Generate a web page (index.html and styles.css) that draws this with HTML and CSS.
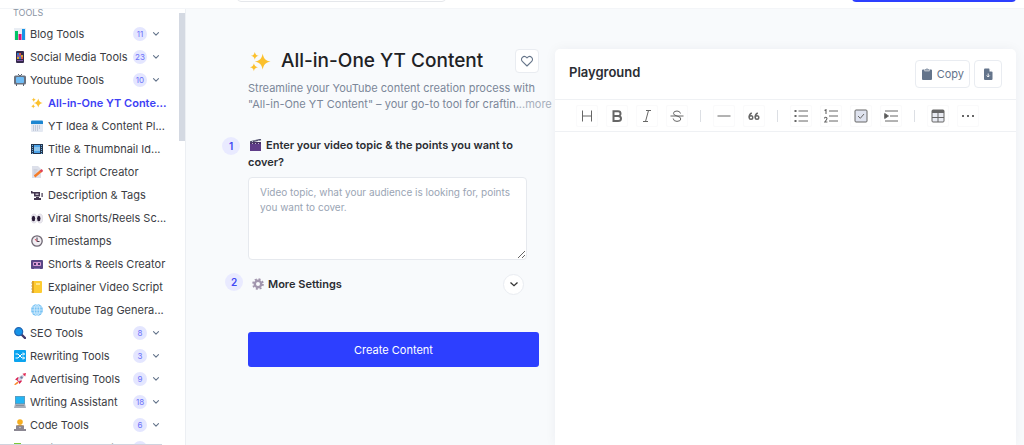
FILE: index.html
```html
<!DOCTYPE html>
<html lang="en">
<head>
<meta charset="utf-8">
<title>All-in-One YT Content</title>
<link rel="stylesheet" href="styles.css">
</head>
<body>
<svg class="defs" aria-hidden="true">
  <symbol id="chev" viewBox="0 0 10 10"><path d="M2.500 3.700 5 6.200 7.500 3.700" fill="none" stroke="currentColor" stroke-width="1.100" stroke-linecap="round" stroke-linejoin="round"/></symbol>
  <symbol id="sparkles" viewBox="0 0 24 24"><path fill="#fbc02d" d="M14.500 3c1.300 5.800 3.200 7.700 9 9-5.800 1.300-7.700 3.200-9 9-1.300-5.800-3.200-7.700-9-9 5.800-1.300 7.700-3.200 9-9zM5.500 1c.7 2.900 1.600 3.800 4.500 4.500-2.900.7-3.800 1.600-4.500 4.500C4.800 7.100 3.900 6.200 1 5.500 3.900 4.800 4.800 3.900 5.500 1zM4.500 14c.7 2.900 1.600 3.800 4.500 4.500-2.900.7-3.800 1.600-4.500 4.500-.7-2.900-1.600-3.800-4.500-4.500 2.900-.7 3.800-1.600 4.500-4.500z"/></symbol>
</svg>

<header class="topbar">
  <input class="search" type="search" aria-label="Search tools">
  <button class="upgrade" type="button" aria-label="Upgrade"></button>
</header>

<div class="shell">
  <nav class="sidebar" aria-label="Tools">
    <h2 class="label">TOOLS</h2>
    <ul class="list">
      <li><a class="row" href="#"><svg class="ic" viewBox="0 0 12 12"><path fill="#e9eef4" d="M0 0h12v12H0z"/><path fill="#00c566" d="M1 3h3v9H1z"/><path fill="#e0107a" d="M4.500 6h3v6h-3z"/><path fill="#1593e6" d="M8 1h3v11H8z"/></svg><span class="name">Blog Tools</span><span class="count">11</span><svg class="chev"><use href="#chev"/></svg></a></li>
      <li><a class="row" href="#"><svg class="ic" viewBox="0 0 12 12"><rect x="2" y="0" width="8" height="12" rx="1" fill="#352a4d"/><path fill="#297cc9" d="M3 2h2v2H3zM5 6h2v2H5z"/><path fill="#e2553c" d="M5 2h2v2H5zM7 6h2v2H7z"/><path fill="#d9a52e" d="M7 4h2v2H7zM3 6h2v2H3z"/><path fill="#805aa8" d="M3 4h4v2H3zM3 9h6v1H3z"/></svg><span class="name">Social Media Tools</span><span class="count">23</span><svg class="chev"><use href="#chev"/></svg></a></li>
      <li><a class="row" href="#"><svg class="ic" viewBox="0 0 12 12"><path d="M4 0l2 2 2-2M2.500 10v2M9.500 10v2" stroke="#5b6370" fill="none"/><rect y="1.500" width="12" height="9" rx="1.500" fill="#69717f"/><rect x="2" y="3" width="8" height="6" rx="1" fill="#6fbcf5"/></svg><span class="name">Youtube Tools</span><span class="count">10</span><svg class="chev"><use href="#chev"/></svg></a>
        <ul class="list sub">
          <li><a class="row active" href="#"><svg class="ic"><use href="#sparkles"/></svg><span class="name">All-in-One YT Conte...</span></a></li>
          <li><a class="row" href="#"><svg class="ic" viewBox="0 0 12 12"><rect y="1" width="12" height="11" rx="1" fill="#e4e9f2"/><path fill="#1c86d1" d="M0 1.500Q0 .5 1 .5h10q1 0 1 1V4H0z"/><path d="M2 6h8M2 8h8M2 10h6" stroke="#a3aec4" stroke-dasharray="1 1"/></svg><span class="name">YT Idea &amp; Content Pl...</span></a></li>
          <li><a class="row" href="#"><svg class="ic" viewBox="0 0 12 12"><path fill="#24364f" d="M0 1h12v10H0z"/><path fill="#4da3e8" d="M3 2h6v8H3z"/><path fill="#8ec6ee" d="M3 4h6v4H3z"/><path d="M1.500 2v9M10.500 2v9" stroke="#6fb2e6" stroke-dasharray="1 1"/></svg><span class="name">Title &amp; Thumbnail Id...</span></a></li>
          <li><a class="row" href="#"><svg class="ic" viewBox="0 0 12 12"><path fill="#dde0ea" d="M1 0h6l3 3v9H1z"/><path d="M2.500 4h4M2.500 6h3M2.500 8h2" stroke="#b4b8c8" stroke-width=".7"/><path d="M3.500 10.500 10 5" stroke="#f57c28" stroke-width="2.400"/><path d="m9.500 5.500 2-1.500" stroke="#e04358" stroke-width="2.400"/></svg><span class="name">YT Script Creator</span></a></li>
          <li><a class="row" href="#"><svg class="ic" viewBox="0 0 12 12"><path fill="#43364f" d="M0 2h1.500v1H9v4.500H3V4.500H0zM10.500 4h1.200v4h-1.200zM5 8h3v1h2v2H3V9h2z"/><path fill="#c4bccb" d="M4.500 4.500h3V6h-3z"/></svg><span class="name">Description &amp; Tags</span></a></li>
          <li><a class="row" href="#"><svg class="ic" viewBox="0 0 12 12"><g fill="#eceaf1" stroke="#ccc8d5" stroke-width=".5"><ellipse cx="3" cy="6.500" rx="2.800" ry="4.500"/><ellipse cx="9" cy="6.500" rx="2.800" ry="4.500"/></g><ellipse cx="2.500" cy="6.500" rx="1.700" ry="2.700" fill="#291b37"/><ellipse cx="7.800" cy="6.500" rx="1.700" ry="2.700" fill="#291b37"/></svg><span class="name">Viral Shorts/Reels Sc...</span></a></li>
          <li><a class="row" href="#"><svg class="ic" viewBox="0 0 12 12"><circle cx="6" cy="6" r="5.200" fill="#f0edf2" stroke="#6d6672" stroke-width="1.300"/><path d="M6 2.500V6.500H8.500" fill="none" stroke="#433b49"/><path d="M6 6.500 4 4" stroke="#e34b62"/></svg><span class="name">Timestamps</span></a></li>
          <li><a class="row" href="#"><svg class="ic" viewBox="0 0 12 12"><rect y="2" width="12" height="9" rx="1" fill="#594787"/><rect x="2" y="4" width="8" height="4" rx="1" fill="#d99bd6"/><path fill="#483670" d="M3 5h2v2H3zM7 5h2v2H7z"/><path fill="#8572b1" d="M3 10h6v1H3z"/></svg><span class="name">Shorts &amp; Reels Creator</span></a></li>
          <li><a class="row" href="#"><svg class="ic" viewBox="0 0 12 12"><rect x="1" width="10" height="12" rx="1" fill="#fdcb31"/><path fill="#e5a51f" d="M1 0h2v12H1z"/><path d="M0 2h2M0 5h2M0 8h2M0 11h2" stroke="#b69a58" stroke-width=".7"/><path fill="#ffe58b" d="M5 2h4v2H5z"/></svg><span class="name">Explainer Video Script</span></a></li>
          <li><a class="row" href="#"><svg class="ic" viewBox="0 0 12 12"><circle cx="6" cy="6" r="6" fill="#79c3f4"/><g fill="none" stroke="#d9f0ff" stroke-width=".8"><ellipse cx="6" cy="6" rx="2.800" ry="5.600"/><path d="M6 0v12M0 6h12M1 3h10M1 9h10"/></g></svg><span class="name">Youtube Tag Genera...</span></a></li>
        </ul>
      </li>
      <li><a class="row" href="#"><svg class="ic" viewBox="0 0 12 12"><path d="m7.500 7.500 3.500 3.500" stroke="#43396a" stroke-width="2.400" stroke-linecap="round"/><circle cx="4.700" cy="4.700" r="4" fill="#1594e8" stroke="#2165b3" stroke-width="1.200"/></svg><span class="name">SEO Tools</span><span class="count">8</span><svg class="chev"><use href="#chev"/></svg></a></li>
      <li><a class="row" href="#"><svg class="ic" viewBox="0 0 12 12"><rect width="12" height="12" rx="1" fill="#0ba4ef"/><path d="M1.500 4H4l4 4h2.500M1.500 8H4l4-4h2.500M9 2.500 10.500 4 9 5.500M9 6.500 10.500 8 9 9.500" fill="none" stroke="#fff"/></svg><span class="name">Rewriting Tools</span><span class="count">3</span><svg class="chev"><use href="#chev"/></svg></a></li>
      <li><a class="row" href="#"><svg class="ic" viewBox="0 0 12 12"><path fill="#d91e50" d="M1 6.500 4 4l4 4-2.500 3-1-2-2-2z"/><path fill="#d8d2e0" d="M3.500 7Q5 2 10 1.500 10 6.500 5 8.500z"/><path fill="#e22752" d="M8.500.8 12 0l-.8 3.500z"/><circle cx="7.500" cy="4.500" r="1.200" fill="#67809f"/><path fill="#f98a2c" d="m3.500 8.500-3.500 3 1.500.5 3-2z"/></svg><span class="name">Advertising Tools</span><span class="count">9</span><svg class="chev"><use href="#chev"/></svg></a></li>
      <li><a class="row" href="#"><svg class="ic" viewBox="0 0 12 12"><path fill="#828b99" d="M1 0h10v8H1z"/><path fill="#23b5f4" d="M1.500.5h9v7h-9z"/><path fill="#a8aeb9" d="M1 8h10l1 4H0z"/><path stroke="#7c8492" stroke-width=".7" d="M2 9.500h8"/></svg><span class="name">Writing Assistant</span><span class="count">18</span><svg class="chev"><use href="#chev"/></svg></a></li>
      <li><a class="row" href="#"><svg class="ic" viewBox="0 0 12 12"><circle cx="6" cy="3" r="2.800" fill="#f5ae20"/><path fill="#e39a25" d="M2 7q4-3 8 0v2H2z"/><path fill="#8b8792" d="M2 6.500h8v4H2zM0 10h12v2H0z"/><circle cx="6" cy="8.500" r=".7" fill="#ddd"/></svg><span class="name">Code Tools</span><span class="count">6</span><svg class="chev"><use href="#chev"/></svg></a></li>
      <li><a class="row" href="#"><svg class="ic" viewBox="0 0 12 12"><path fill="#7ec936" d="M0 1h7v3h5v7H0z"/></svg><span class="name">Custom Generator</span><span class="count">2</span><svg class="chev"><use href="#chev"/></svg></a></li>
    </ul>
    <div class="thumb"></div>
    <div class="status"></div>
  </nav>

  <main class="main">
    <form class="form">
      <section class="intro">
        <div class="head">
          <svg class="spark"><use href="#sparkles"/></svg>
          <h1>All-in-One YT Content</h1>
          <button class="fav" type="button" aria-label="Add to favourites"><svg viewBox="0 0 14 14"><path d="M7 12 2.300 7.300C-.2 4.700 3.500.4 7 3.800c3.500-3.400 7.200.9 4.700 3.500z" fill="none" stroke="#66758a" stroke-width="1.100" stroke-linejoin="round"/></svg></button>
        </div>
        <p class="desc">Streamline your YouTube content creation process with<br>"All-in-One YT Content" – your go-to tool for craftin<a class="more" href="#">...more</a></p>
      </section>

      <section class="step">
        <span class="num">1</span>
        <div class="field">
          <label for="topic"><svg class="ic inline" viewBox="0 0 12 12"><path fill="#5f3c88" d="M0 5h11v7H0z"/><path fill="#493166" d="M0 3h11v2H0z"/><path d="M0 3 11 .5" stroke="#51516d" stroke-width="1.700"/><path d="m2 2 1 1m2-1.500 1 1m2-1.700 1 1M2 5l1-1m2 1 1-1m2 1 1-1" stroke="#d7d4e5" stroke-width=".8"/></svg>Enter your video topic &amp; the points you want to cover?</label>
          <textarea id="topic" placeholder="Video topic, what your audience is looking for, points you want to cover."></textarea>
        </div>
      </section>

      <section class="step settings">
        <span class="num">2</span>
        <h2><svg class="ic inline" viewBox="0 0 12 12"><circle cx="6" cy="6" r="4.900" fill="none" stroke="#a296ae" stroke-width="1.800" stroke-dasharray="2 1.850"/><circle cx="6" cy="6" r="3.200" fill="none" stroke="#a296ae" stroke-width="2.400"/></svg>More Settings</h2>
        <button class="expand" type="button" aria-label="Show more settings"><svg viewBox="0 0 10 10"><path d="M1.500 3.500 5 6.700 8.500 3.500" fill="none" stroke="#333" stroke-width="1.300"/></svg></button>
      </section>

      <button class="create" type="button">Create Content</button>
    </form>

    <section class="card">
      <div class="cardhead">
        <h2>Playground</h2>
        <button class="act" type="button"><svg viewBox="0 0 12 12"><path fill="#64748b" d="M2 1.500h1.500v1.700h5V1.500H10q1 0 1 1V11q0 1-1 1H2q-1 0-1-1V2.500q0-1 1-1z"/><path fill="#94a0b0" d="M4 1h1q1-1.500 2 0h1v1.700H4z"/></svg>Copy</button>
        <button class="act save" type="button" aria-label="Download"><svg viewBox="0 0 12 12"><path fill="#64748b" d="M3 .5h4l3.500 3.500v7q0 1-1 1H3q-1 0-1-1v-9.500q0-1 1-1z"/><path fill="#fff" d="M7.500 .5V3.500h3z"/><path d="M6.200 5.500v3.500M4.700 7.500l1.500 1.500 1.500-1.500" stroke="#fff" fill="none" stroke-width=".9"/></svg></button>
      </div>
      <div class="tools" role="toolbar" aria-label="Formatting">
        <button class="tool" type="button" aria-label="Heading"><svg viewBox="0 0 14 14"><path d="M2.500 1.500v11M11.500 1.500v11M2.500 7h9"/></svg></button>
        <button class="tool" type="button" aria-label="Bold"><svg viewBox="0 0 14 14"><path d="M3.500 2.200H8q2.500 0 2.500 2.400T8 7H3.500zM3.500 7H8q3 0 3 2.500T8 12H3.500z" stroke-width="2"/></svg></button>
        <button class="tool" type="button" aria-label="Italic"><svg viewBox="0 0 14 14"><path d="M6 1.500h5M3 12.500h5M8.500 1.500l-3 11"/></svg></button>
        <button class="tool" type="button" aria-label="Strikethrough"><svg viewBox="0 0 14 14"><path d="M.5 7h13M10.500 4.500Q10 2 7 2 3.500 2 3.500 4.300 3.500 6.300 7 7q3.800.8 3.800 3T7 12.400Q3.500 12.400 3.200 9.500"/></svg></button>
        <span class="sep"></span>
        <button class="tool" type="button" aria-label="Line"><svg viewBox="0 0 14 14"><path d="M.5 7h13"/></svg></button>
        <button class="tool" type="button" aria-label="Quote"><svg viewBox="0 0 14 14"><g stroke-width="1.400"><circle cx="4" cy="8.500" r="1.800"/><path d="M2.200 8.500Q2 5 4.800 4"/><circle cx="10" cy="8.500" r="1.800"/><path d="M8.200 8.500Q8 5 10.800 4"/></g></svg></button>
        <span class="sep"></span>
        <button class="tool" type="button" aria-label="Bullet list"><svg viewBox="0 0 14 14"><path d="M4.500 2H14M4.500 7H14M4.500 12H14"/><path d="M.5 2h2M.5 7h2M.5 12h2" stroke-width="2"/></svg></button>
        <button class="tool" type="button" aria-label="Numbered list"><svg viewBox="0 0 14 14"><path d="M5 2h9M5 7h9M5 12h9"/><path d="M.5 1.500 2 .7V5M.5 9.500q0-1.200 1.200-1.200T3 9.500Q3 10.500.7 13H3.400" stroke-width="1.100"/></svg></button>
        <button class="tool" type="button" aria-label="Task list"><svg viewBox="0 0 14 14"><rect x="1" y="1" width="12" height="12" rx="1" fill="#dfe3ef"/><path d="m4 7 2.300 2.300L10 5"/></svg></button>
        <button class="tool" type="button" aria-label="Indent"><svg viewBox="0 0 14 14"><path d="M1 2h13M6 7h8M1 12h13"/><path d="M.7 4.500 4.500 7 .7 9.500z" fill="#555"/></svg></button>
        <span class="sep"></span>
        <button class="tool" type="button" aria-label="Table"><svg viewBox="0 0 14 14"><rect x="1" y="1" width="12" height="12" rx="1" fill="#e8eaf1"/><path d="M1 2.500h12" stroke-width="3"/><path d="M1 8.500h12M7 3v10"/></svg></button>
        <button class="tool" type="button" aria-label="More"><svg viewBox="0 0 14 14"><path d="M1 7h2M6 7h2M11 7h2" stroke-width="1.800"/></svg></button>
      </div>
      <div class="editor" contenteditable="true" role="textbox" aria-label="Document"></div>
    </section>
  </main>
</div>
</body>
</html>
```
FILE: styles.css
```css
* { box-sizing: border-box; }
html, body { height: 100%; }
body {
  margin: 0;
  display: flex;
  flex-direction: column;
  overflow: hidden;
  font-family: Inter, "Liberation Sans", sans-serif;
  font-size: 11px;
  color: #2b2d33;
  background: #f8fafc;
}
h1, h2, p, ul { margin: 0; padding: 0; }
ul { list-style: none; }
a { text-decoration: none; color: inherit; }
button { font: inherit; padding: 0; cursor: pointer; }
.defs { display: none; }

.topbar {
  flex: none;
  height: 9px;
  display: flex;
  align-items: flex-end;
  justify-content: space-between;
  padding: 0 8px 6px 237px;
  background: #fff;
  border-bottom: 1px solid #f3f5f8;
}
.search { width: 209px; height: 32px; border: 1px solid #e5e7eb; border-radius: 4px; background: #fff; }
.upgrade { width: 164px; height: 32px; border: 0; border-radius: 4px; background: #2d3fff; }

.shell { flex: 1; min-height: 0; display: flex; }

.sidebar {
  position: relative;
  flex: none;
  width: 186px;
  overflow: hidden;
  background: #fff;
  border-right: 1px solid #eceff3;
}
.label { padding: 0 13px; font-size: 9px; line-height: 8px; height: 13px; font-weight: 400; color: #8a94a3; }
.row { display: flex; align-items: center; height: 23px; padding: 0 24px 0 14px; color: #3b3d44; white-space: nowrap; }
.ic { flex: none; width: 12px; height: 12px; margin-right: 4px; }
.name { flex: 1; }
.count {
  width: 14px; height: 14px; border-radius: 7px;
  background: #e4e6ff; color: #6a70fa;
  font-size: 8px; line-height: 14px; text-align: center;
}
.chev { width: 10px; height: 10px; margin-left: 4px; color: #64748b; }
.sub .row { padding: 0 0 0 31px; }
.sub .ic { margin-right: 5px; }
.sub .active { color: #3d40f5; font-weight: 600; }
.thumb { position: absolute; top: 4px; right: 0; width: 6px; height: 128px; background: #d4d9e2; }
.status { position: absolute; left: 0; bottom: 0; width: 162px; height: 1px; background: #d0d3de; }

.main {
  flex: 1;
  min-width: 0;
  display: grid;
  grid-template-columns: 353px 1fr;
  column-gap: 16px;
  padding: 40px 8px 0 0;
}
.form { padding-left: 62px; }
.head { display: flex; align-items: center; height: 24px; }
.spark { width: 21px; height: 21px; margin: 0 10px 0 2px; }
h1 { flex: 1; font-size: 19px; line-height: 24px; font-weight: 500; color: #202124; white-space: nowrap; }
.fav { display: grid; place-items: center; width: 24px; height: 24px; border: 1px solid #e9ecf1; border-radius: 4px; background: #fff; }
.fav svg { width: 14px; height: 14px; }
.desc { margin-top: 7px; line-height: 16px; color: #7b8799; white-space: nowrap; }
.more { color: #a8b0bc; }

.step { position: relative; }
.step .num {
  position: absolute; left: -26px; top: 0;
  width: 18px; height: 18px; border-radius: 9px;
  background: #e9eaff; color: #4048f5;
  font-size: 10px; font-weight: 600; line-height: 18px; text-align: center;
}
.field { padding: 0 12px 0 0; margin-top: 25px; }
.field label { display: block; line-height: 17px; font-weight: 600; }
.inline { display: inline-block; margin: 0 4px 0 2px; vertical-align: -2px; }
textarea {
  display: block;
  width: 100%;
  height: 83px;
  margin-top: 6px;
  padding: 7px 11px;
  border: 1px solid #e6e9ee;
  border-radius: 4px;
  background: #fff;
  font: 10px/15px Inter, "Liberation Sans", sans-serif;
  resize: vertical;
}
textarea::placeholder { color: #9aa5b4; }
.settings { display: flex; align-items: center; justify-content: space-between; height: 22px; margin-top: 13px; padding: 0 15px 0 2px; }
.settings .num { left: -23px; }
.settings h2 { font-size: 11px; line-height: 16px; font-weight: 600; }
.expand { display: grid; place-items: center; width: 21px; height: 21px; border: 1px solid #e9ecf1; border-radius: 11px; background: #fff; }
.expand svg { width: 10px; height: 10px; }
.create { display: block; width: 100%; height: 35px; margin-top: 37px; border: 0; border-radius: 3px; background: #2d3fff; color: #fff; }

.card { min-width: 0; display: flex; flex-direction: column; background: #fff; border-radius: 5px 5px 0 0; box-shadow: 0 0 12px rgba(30, 41, 59, 0.05); }
.cardhead { display: flex; align-items: center; gap: 4px; height: 51px; padding: 0 14px; border-bottom: 1px solid #eff1f4; }
.cardhead h2 { flex: 1; align-self: flex-start; margin-top: 15px; font-size: 13px; font-weight: 600; line-height: 16px; }
.act { display: flex; align-items: center; justify-content: center; gap: 4px; height: 28px; padding: 0 5px; border: 1px solid #e9ecf1; border-radius: 4px; background: #fff; color: #64748b; }
.act svg { width: 12px; height: 12px; }
.save { width: 28px; }
.tools { display: flex; align-items: center; gap: 8px; height: 32px; padding: 0 21px; border-bottom: 1px solid #eff1f4; }
.tool { flex: none; display: grid; place-items: center; width: 22px; height: 22px; border: 1px solid #fafafb; border-radius: 2px; background: #fff; }
.tool svg { width: 14px; height: 14px; fill: none; stroke: #666; stroke-width: 1; }
.sep { flex: none; width: 1px; height: 12px; margin: 0 4px; background: #dcdfe4; }
.editor { flex: 1; outline: none; }
```
